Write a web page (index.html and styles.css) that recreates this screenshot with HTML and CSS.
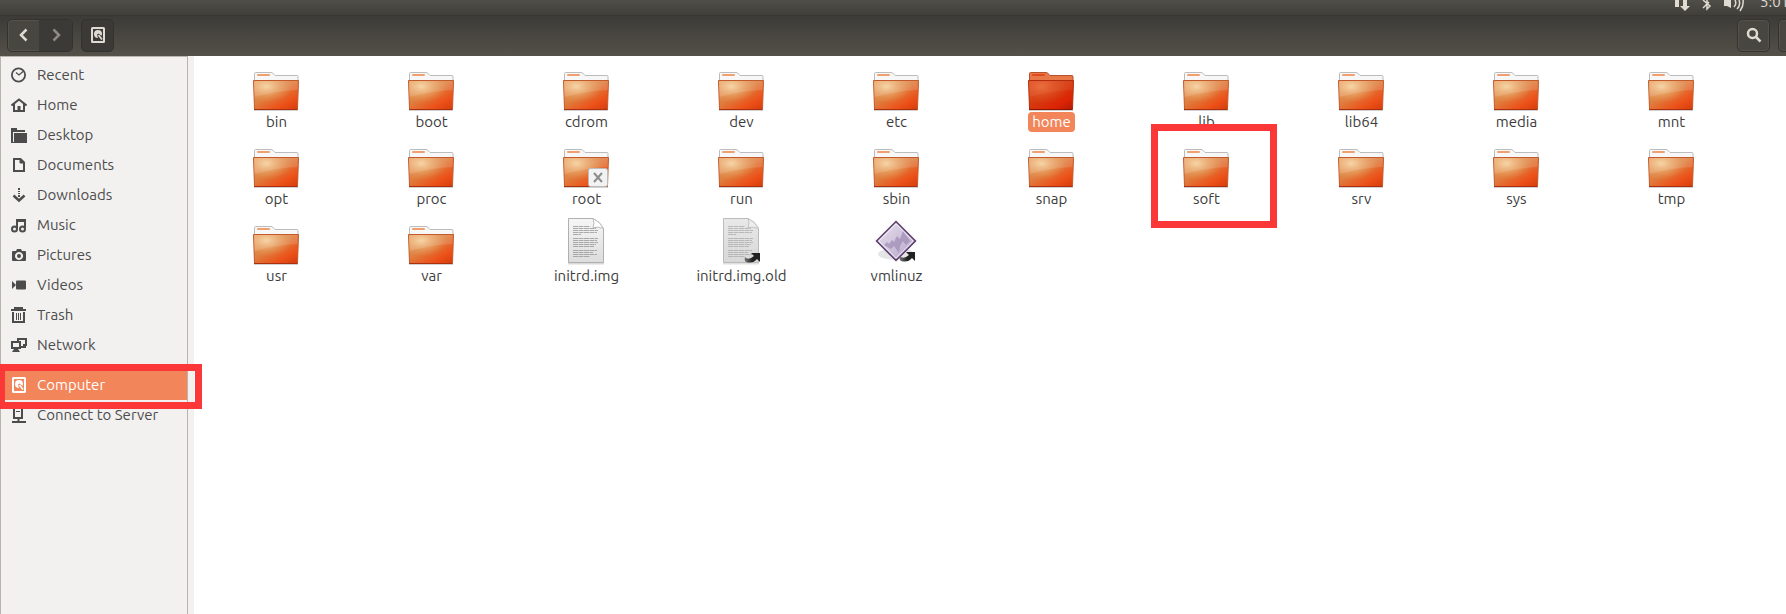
FILE: index.html
```
<!DOCTYPE html>
<html lang="en">
<head>
<meta charset="UTF-8" />
<meta name="viewport" content="width=device-width, initial-scale=1" />
<title>Computer</title>
<link rel="stylesheet" href="styles.css">
</head>
<body>
  <!-- shared drawings -->
  <svg class="defs" width="0" height="0" aria-hidden="true">
    <defs>
      <linearGradient id="front" x1="0" y1="0" x2="0.9" y2="1">
        <stop offset="0" stop-color="#e8965a"/>
        <stop offset="0.45" stop-color="#de7f40"/>
        <stop offset="0.8" stop-color="#ec5018"/>
        <stop offset="1" stop-color="#d8400f"/>
      </linearGradient>
      <radialGradient id="glow" cx="0.28" cy="0.2" r="0.6">
        <stop offset="0" stop-color="#f5d09a"/>
        <stop offset="1" stop-color="#e8a05c" stop-opacity="0"/>
      </radialGradient>
      <linearGradient id="frontSel" x1="0" y1="0" x2="0.9" y2="1">
        <stop offset="0" stop-color="#df4a1c"/>
        <stop offset="0.45" stop-color="#d43c10"/>
        <stop offset="0.8" stop-color="#dc2404"/>
        <stop offset="1" stop-color="#b81c02"/>
      </linearGradient>
      <radialGradient id="glowSel" cx="0.28" cy="0.2" r="0.65">
        <stop offset="0" stop-color="#e86634"/>
        <stop offset="1" stop-color="#e05020" stop-opacity="0"/>
      </radialGradient>
      <linearGradient id="paper" x1="0" y1="0" x2="0" y2="1">
        <stop offset="0" stop-color="#f6f6f6"/>
        <stop offset="1" stop-color="#dcdcdc"/>
      </linearGradient>
      <linearGradient id="gem" x1="0" y1="0" x2="1" y2="1">
        <stop offset="0" stop-color="#e9e3ef"/>
        <stop offset="1" stop-color="#b5a4c8"/>
      </linearGradient>
      <linearGradient id="arrow" x1="0" y1="0" x2="1" y2="0">
        <stop offset="0" stop-color="#777"/>
        <stop offset="0.5" stop-color="#222"/>
      </linearGradient>
    </defs>
    <symbol id="folder" viewBox="0 0 48 48">
      <path d="M2 47.500h44" stroke="#000" stroke-opacity=".18" stroke-width="2"/>
      <path d="M2.500 19V10.500q0-1 1-1H19q1 0 1.800.7l2.200 2.300H45q1 0 1 1V19z" fill="#f7f7f7" stroke="#bcbcbc"/>
      <rect x="5" y="11" width="13" height="2" rx="1" fill="#f0a070"/>
      <path d="M1.500 17.500h45l-1 28.500q0 .5-.5.5H3q-.5 0-.5-.5z" fill="url(#front)" stroke="#c25a2c"/>
      <path d="M2 18h44l-.5 27H3z" fill="url(#glow)"/>
      <path d="M2 18h44l-.3 9Q24 28 2.500 34z" fill="#fff" fill-opacity=".13"/>
      <path d="M2 46.500h43.500" stroke="#aa3010"/>
    </symbol>
    <symbol id="folder-selected" viewBox="0 0 48 48">
      <path d="M2 47.500h44" stroke="#000" stroke-opacity=".18" stroke-width="2"/>
      <path d="M2.500 19V10.500q0-1 1-1H19q1 0 1.800.7l2.200 2.300H45q1 0 1 1V19z" fill="#e87848" stroke="#b4522e"/>
      <rect x="5" y="11" width="13" height="2" rx="1" fill="#e04a20"/>
      <path d="M1.500 17.500h45l-1 28.500q0 .5-.5.5H3q-.5 0-.5-.5z" fill="url(#frontSel)" stroke="#b02c0c"/>
      <path d="M2 18h44l-.5 27H3z" fill="url(#glowSel)"/>
      <path d="M2 18h44l-.3 9Q24 28 2.500 34z" fill="#fff" fill-opacity=".05"/>
      <path d="M2 46.500h43.500" stroke="#8c1400"/>
    </symbol>
    <symbol id="document" viewBox="0 0 48 48">
      <path d="M6 46.500h36" stroke="#000" stroke-opacity=".15" stroke-width="2"/>
      <path d="M6.500 1.500H31q7 3 10.500 10v34h-35z" fill="url(#paper)" stroke="#b0b0b0"/>
      <path d="M31 1.500q2 5 0 9 6-1 10.500 1Q38 4.500 31 1.500z" fill="#fff" stroke="#bbb"/>
      <path d="M11 9.500h17M11 11.500h23M11 13.500h25M11 15.500h24M11 17.500h8M11 21.500h25M11 23.500h24M11 25.500h25M11 27.500h23M11 29.500h21M11 33.500h24M11 35.500h20M11 37.500h24M11 39.500h17" stroke="#999" stroke-opacity=".8" stroke-dasharray="5 .5"/>
    </symbol>
    <symbol id="link" viewBox="0 0 17 12">
      <path d="M7 1h9v9l-3-3q-4 5-11 3-2-1-1-5 3 4 9-1z" fill="url(#arrow)"/>
    </symbol>
    <symbol id="drive" viewBox="0 0 16 16">
      <path fill="currentColor" fill-rule="evenodd" d="M2.500 0h11q1.500 0 1.500 1.500v13q0 1.500-1.500 1.500h-11Q1 16 1 14.500v-13Q1 0 2.500 0zM3 2v12h10V2z"/>
      <path fill="currentColor" fill-rule="evenodd" d="M8 3a4 4 0 0 1 4 4q0 1-.4 1.700L8.500 6.500 7 7.500 8 11a4 4 0 0 1 0-8z"/>
      <path d="M8.500 8l3.500 4.500" stroke="currentColor" stroke-width="1.800"/>
    </symbol>
  </svg>

  <div class="panel">
    <svg class="network" width="16" height="12" viewBox="0 0 16 12"><path d="M1 0h4v7H1zM9 0h4v6h3l-5 5-5-5h3z" fill="currentColor"/></svg>
    <svg class="bluetooth" width="10" height="12" viewBox="0 0 10 12"><path d="M1 0l7 6-3 3V0M1 8l6-6" fill="none" stroke="currentColor" stroke-width="1.500"/></svg>
    <svg class="sound" width="20" height="12" viewBox="0 0 20 12"><path d="M0 0h7v8L3 6H0z" fill="currentColor"/><path d="M10 7q3-3 1-7M13 9q4-4 2-9M16 11q4-5 3-11" fill="none" stroke="currentColor" stroke-width="1.500"/></svg>
    <span class="clock">5:01</span>
  </div>

  <header class="toolbar">
    <div class="nav">
      <button type="button" aria-label="Back"><svg width="16" height="16" viewBox="0 0 16 16"><path d="M10.500 2.500L5 8l5.500 5.500" fill="none" stroke="currentColor" stroke-width="2.500"/></svg></button>
      <button type="button" class="off" aria-label="Forward"><svg width="16" height="16" viewBox="0 0 16 16"><path d="M5.500 2.500L11 8l-5.500 5.500" fill="none" stroke="currentColor" stroke-width="2.500"/></svg></button>
    </div>
    <button type="button" class="tool pressed" aria-label="Computer"><svg width="16" height="16"><use href="#drive"/></svg></button>
    <button type="button" class="tool search" aria-label="Search"><svg width="16" height="16" viewBox="0 0 16 16"><circle cx="6.500" cy="6.500" r="4.500" fill="none" stroke="currentColor" stroke-width="2.500"/><path d="M9.500 9.500l5 5" stroke="currentColor" stroke-width="2.500"/></svg></button>
    <button type="button" class="tool more" aria-label="View"></button>
  </header>

  <main>
    <nav class="sidebar">
      <a href="#"><svg width="16" height="16" viewBox="0 0 16 16"><circle cx="7.500" cy="8" r="6.600" fill="none" stroke="currentColor" stroke-width="1.800"/><path d="M5 5.500l3 2.500 4-3.500" fill="none" stroke="currentColor" stroke-width="1.200"/></svg>Recent</a>
      <a href="#"><svg width="16" height="16" viewBox="0 0 16 16"><path d="M.5 8.500L8 2.500l7.500 6" fill="none" stroke="currentColor" stroke-width="2"/><path d="M3 7v7h10V7" fill="none" stroke="currentColor" stroke-width="2"/><path d="M6.500 9h3v5h-3z" fill="currentColor"/></svg>Home</a>
      <a href="#"><svg width="16" height="16" viewBox="0 0 16 16"><path d="M0 1h6v2h8v2H2v11H0z" fill="currentColor"/><path d="M3 6h13v10H2V6z" fill="currentColor"/><path d="M2.500 5v10" stroke="#f2f1f0"/></svg>Desktop</a>
      <a href="#"><svg width="16" height="16" viewBox="0 0 16 16"><path d="M3 2h6.500L13 5.500V14H3z" fill="none" stroke="currentColor" stroke-width="2"/><path d="M9 2v4h4" fill="currentColor" stroke="currentColor"/></svg>Documents</a>
      <a href="#"><svg width="16" height="16" viewBox="0 0 16 16"><path d="M7 1h2v2H7zM7 4h2v1H7zM7 6h2v1H7zM7 8h2v2H7z" fill="currentColor"/><path d="M2.500 8.500L8 13.500l5.500-5" fill="none" stroke="currentColor" stroke-width="2.500"/></svg>Downloads</a>
      <a href="#"><svg width="16" height="16" viewBox="0 0 16 16"><path d="M6 12V3h8v8M6 4h8" fill="none" stroke="currentColor" stroke-width="2"/><circle cx="3.500" cy="12" r="2.500" fill="none" stroke="currentColor" stroke-width="2"/><circle cx="11.500" cy="12" r="2.500" fill="none" stroke="currentColor" stroke-width="2"/></svg>Music</a>
      <a href="#"><svg width="16" height="16" viewBox="0 0 16 16"><path fill-rule="evenodd" d="M2 4h3l1-2h4l1 2h3q1 0 1 1v8q0 1-1 1H2q-1 0-1-1V5q0-1 1-1zM8 5a4 4 0 1 0 .01 0z" fill="currentColor"/><circle cx="8" cy="9" r="2" fill="currentColor"/></svg>Pictures</a>
      <a href="#"><svg width="16" height="16" viewBox="0 0 16 16"><path d="M1 4l4 4-4 4z" fill="currentColor"/><rect x="5" y="3.500" width="10" height="9" rx="1" fill="currentColor"/></svg>Videos</a>
      <a href="#"><svg width="16" height="16" viewBox="0 0 16 16"><path d="M0 3h15M4 2V1h7v1M2 5v10h11V5" fill="none" stroke="currentColor" stroke-width="2"/><path d="M5.500 6v7M7.500 6v7M9.500 6v7" stroke="currentColor"/></svg>Trash</a>
      <a href="#"><svg width="16" height="16" viewBox="0 0 16 16"><path d="M7 4V2h8v6h-3M1 5h8v6H1z" fill="none" stroke="currentColor" stroke-width="2"/><path d="M3 12h4l2 3H1zM13 8h2v3h-5V9h3z" fill="currentColor"/></svg>Network</a>
      <a href="#" class="current"><svg width="16" height="16"><use href="#drive"/></svg>Computer</a>
      <a href="#"><svg width="16" height="16" viewBox="0 0 16 16"><path d="M3 1h8v10H3zM1 15h14M7.500 11v4" fill="none" stroke="currentColor" stroke-width="2"/><path d="M5 4.500h4" stroke="currentColor"/></svg>Connect to Server</a>
    </nav>

    <ul class="files">
      <li><svg class="icon"><use href="#folder"/></svg><span>bin</span></li>
      <li><svg class="icon"><use href="#folder"/></svg><span>boot</span></li>
      <li><svg class="icon"><use href="#folder"/></svg><span>cdrom</span></li>
      <li><svg class="icon"><use href="#folder"/></svg><span>dev</span></li>
      <li><svg class="icon"><use href="#folder"/></svg><span>etc</span></li>
      <li class="selected"><svg class="icon"><use href="#folder-selected"/></svg><span>home</span></li>
      <li><svg class="icon"><use href="#folder"/></svg><span>lib</span></li>
      <li><svg class="icon"><use href="#folder"/></svg><span>lib64</span></li>
      <li><svg class="icon"><use href="#folder"/></svg><span>media</span></li>
      <li><svg class="icon"><use href="#folder"/></svg><span>mnt</span></li>
      <li><svg class="icon"><use href="#folder"/></svg><span>opt</span></li>
      <li><svg class="icon"><use href="#folder"/></svg><span>proc</span></li>
      <li><svg class="icon" viewBox="0 0 48 48"><use href="#folder"/><rect x="26.500" y="28.500" width="19" height="18" rx="2" fill="#f2f2f2" stroke="#bbb"/><path d="M32 33l8 9M40 33l-8 9" stroke="#8c8c8c" stroke-width="2"/></svg><span>root</span></li>
      <li><svg class="icon"><use href="#folder"/></svg><span>run</span></li>
      <li><svg class="icon"><use href="#folder"/></svg><span>sbin</span></li>
      <li><svg class="icon"><use href="#folder"/></svg><span>snap</span></li>
      <li class="marked"><svg class="icon"><use href="#folder"/></svg><span>soft</span></li>
      <li><svg class="icon"><use href="#folder"/></svg><span>srv</span></li>
      <li><svg class="icon"><use href="#folder"/></svg><span>sys</span></li>
      <li><svg class="icon"><use href="#folder"/></svg><span>tmp</span></li>
      <li><svg class="icon"><use href="#folder"/></svg><span>usr</span></li>
      <li><svg class="icon"><use href="#folder"/></svg><span>var</span></li>
      <li><svg class="icon"><use href="#document"/></svg><span>initrd.img</span></li>
      <li><svg class="icon" viewBox="0 0 48 48"><g opacity=".8"><use href="#document"/><path d="M6 1h25q7 3 11 10v35H6z" fill="#999" fill-opacity=".2"/></g><use href="#link" x="27" y="35" width="17" height="12"/></svg><span>initrd.img.old</span></li>
      <li><svg class="icon" viewBox="0 0 48 48"><ellipse cx="24" cy="37" rx="18" ry="6" fill="#000" fill-opacity=".1"/><path d="M24 4.500L43.500 24 24 43.500 4.500 24z" fill="url(#gem)" stroke="#5c3d6e" stroke-width="1.500"/><path d="M24 7l17 17-17 17L7 24z" fill="none" stroke="#fff" stroke-opacity=".6"/><path d="M12 28l3-3 2 2 3-4 2 2 3-6 3 3 3-8 7 10-4 4-3-4-3 5-1 7-5-7-3 3z" fill="#8d76a6" fill-opacity=".5"/><use href="#link" x="27" y="34" width="17" height="12"/></svg><span>vmlinuz</span></li>
    </ul>
  </main>
</body>
</html>
```
FILE: styles.css
```
/* Reset & base */
*,
*::after {
  box-sizing: border-box;
}
body {
  margin: 0;
  min-height: 100vh;
  display: flex;
  flex-direction: column;
  overflow: hidden;
  background: #fff;
  color: #3c3c3c;
  font-family: 'Ubuntu', 'Noto Sans', sans-serif;
  font-size: 15px;
  line-height: 20px;
}

svg {
  display: block;
  flex: none;
}

.defs {
  position: absolute;
}

/* System panel */
.panel {
  height: 15px;
  display: flex;
  justify-content: flex-end;
  align-items: flex-end;
  padding-bottom: 3px;
  overflow: hidden;
  background: linear-gradient(#504e48, #403f3a);
  color: #dfdbd2;
}

.network {
  margin-right: 12px;
}

.bluetooth {
  margin-right: 12px;
}

.sound {
  margin-right: 16px;
}

.clock {
  width: 26px;
  overflow: hidden;
}

/* Toolbar */
.toolbar {
  height: 41px;
  display: flex;
  align-items: center;
  padding: 0 0 2px 7px;
  overflow: hidden;
  background: linear-gradient(#3c3b37, #545149);
  border-top: 1px solid #393834;
}

.toolbar button {
  display: flex;
  flex: none;
  align-items: center;
  justify-content: center;
  height: 31px;
  padding: 0;
  border: 0;
  background: none;
  color: #dfdbd2;
}

.nav {
  display: flex;
  margin-right: 8px;
  border: 1px solid #33322e;
  border-radius: 5px;
  background: #474640;
  box-shadow: inset 0 0 0 1px #54524b;
}

.nav button {
  width: 31px;
}

.nav .off {
  width: 33px;
  background: #3b3a36;
  border-radius: 0 4px 4px 0;
  color: #8e8b84;
}

.toolbar .tool {
  width: 33px;
  height: 33px;
  border: 1px solid #33322e;
  border-radius: 5px;
  background: #474640;
  box-shadow: inset 0 0 0 1px #54524b;
}

.toolbar .pressed {
  background: #3b3a36;
  box-shadow: none;
}

.search {
  margin-left: auto;
}

/* the view button runs past the window edge */
.toolbar .more {
  margin: 0 -25px 0 8px;
}

/* Sidebar */
main {
  flex: 1;
  display: flex;
}

.sidebar {
  flex: none;
  width: 188px;
  padding-top: 3px;
  border: 1px solid #b8b4ad;
  border-bottom: 0;
  background: #f2f1f0;
}

.sidebar a {
  position: relative;
  display: flex;
  align-items: center;
  gap: 10px;
  height: 30px;
  padding-left: 10px;
  color: #4c4c4c;
  text-decoration: none;
}

.sidebar .current {
  margin-top: 10px;
  background: #f28559;
  color: #fff;
}

/* Files */
.files {
  flex: 1;
  display: grid;
  grid-template-columns: repeat(auto-fill, 155px);
  align-content: start;
  row-gap: 8px;
  margin: 0;
  padding: 7px 0 0 5px;
  border-left: 6px solid #f2f1f0;
  list-style: none;
}

.files li {
  position: relative;
  display: flex;
  flex-direction: column;
  align-items: center;
  gap: 1px;
}

.icon {
  width: 48px;
  height: 48px;
  margin-right: 1px;
}

.files span {
  padding: 0 4px;
  border-radius: 4px;
}

.selected span {
  background: #f28559;
  color: #fff;
}

/* Red marker frames */
.current::after,
.marked::after {
  content: "";
  position: absolute;
  z-index: 1;
  border: 7px solid #fc3737;
}

.current::after {
  inset: -6px -15px -9px -3px;
}

.marked::after {
  top: -16px;
  left: 22px;
  width: 126px;
  height: 104px;
}
```
